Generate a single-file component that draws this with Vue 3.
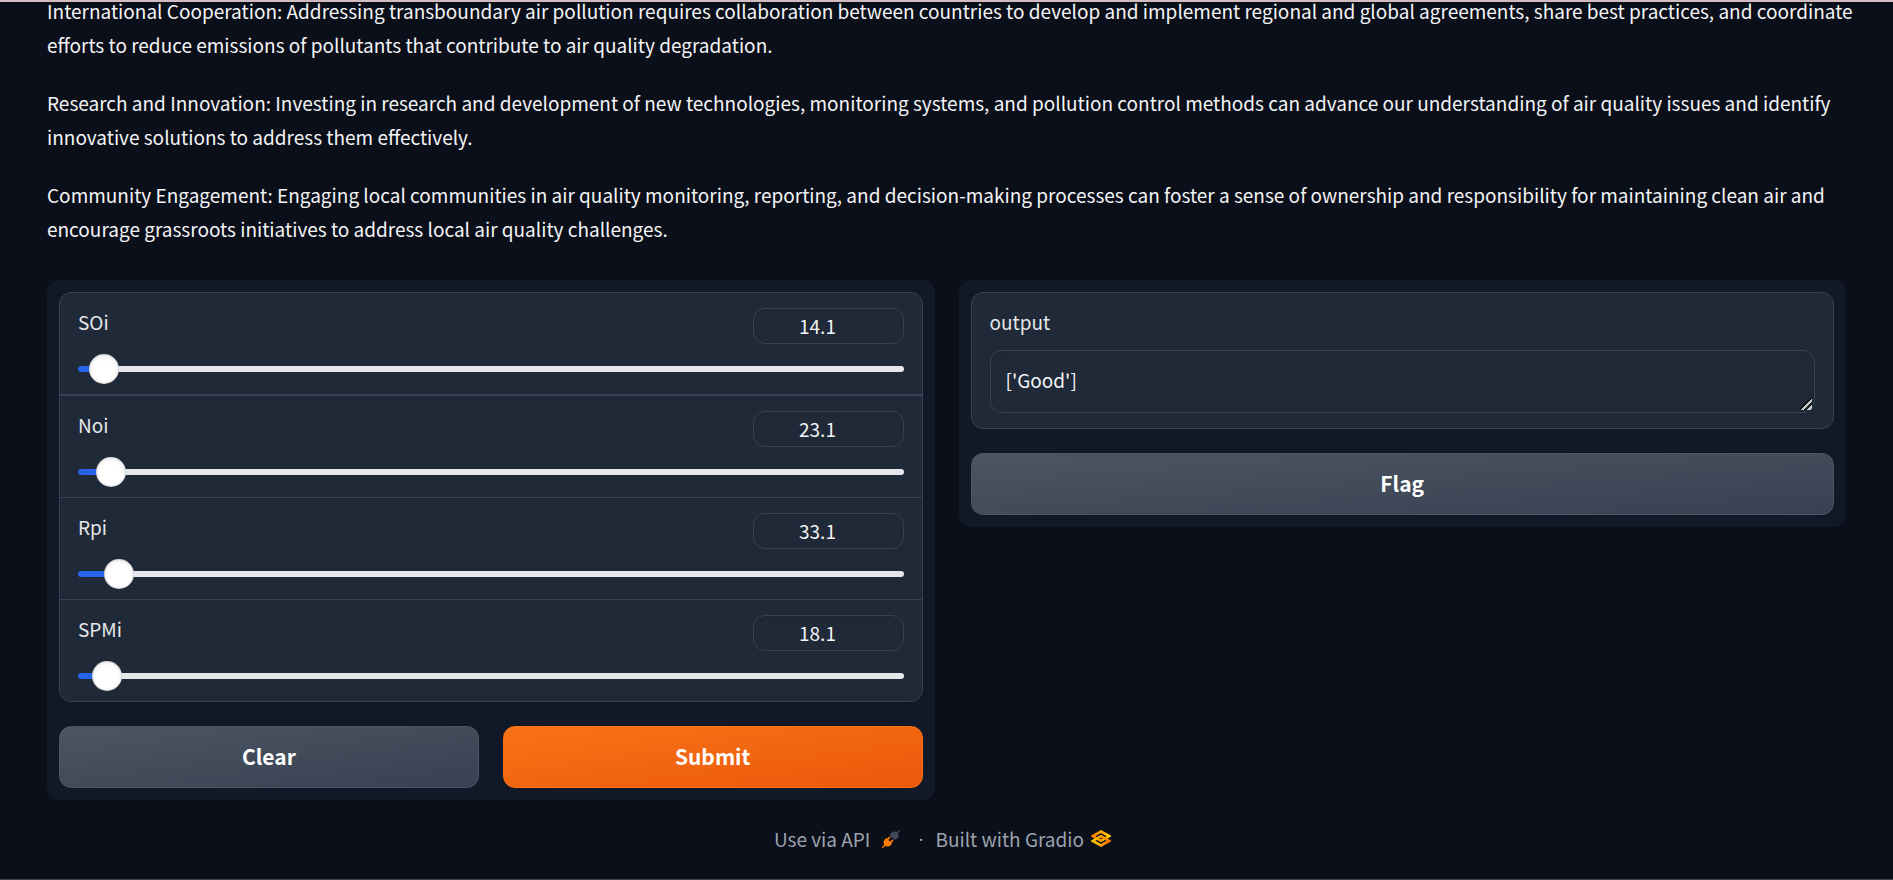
<script setup>
import { reactive, ref } from 'vue'

const paragraphs = [
  'International Cooperation: Addressing transboundary air pollution requires collaboration between countries to develop and implement regional and global agreements, share best practices, and coordinate efforts to reduce emissions of pollutants that contribute to air quality degradation.',
  'Research and Innovation: Investing in research and development of new technologies, monitoring systems, and pollution control methods can advance our understanding of air quality issues and identify innovative solutions to address them effectively.',
  'Community Engagement: Engaging local communities in air quality monitoring, reporting, and decision-making processes can foster a sense of ownership and responsibility for maintaining clean air and encourage grassroots initiatives to address local air quality challenges.',
]

const max = 1000
const sliders = reactive([
  { id: 'soi', label: 'SOi', value: 14.1 },
  { id: 'noi', label: 'Noi', value: 23.1 },
  { id: 'rpi', label: 'Rpi', value: 33.1 },
  { id: 'spmi', label: 'SPMi', value: 18.1 },
])
const output = ref("['Good']")

function clearAll() {
  sliders.forEach((s) => { s.value = 0 })
  output.value = ''
}
</script>

<template>
  <div class="page">
    <main class="content">
      <article class="prose">
        <p v-for="text in paragraphs" :key="text">{{ text }}</p>
      </article>

      <div class="columns">
        <section class="panel">
          <div class="block">
            <div v-for="s in sliders" :key="s.id" class="slider-row">
              <div class="head">
                <label :for="s.id">{{ s.label }}</label>
                <input :id="s.id" v-model.number="s.value" class="number" type="number" min="0" :max="max" step="0.1" />
              </div>
              <input
                v-model.number="s.value"
                class="range"
                type="range"
                min="0"
                :max="max"
                step="0.1"
                :aria-label="s.label"
                :style="{ backgroundSize: (s.value / max) * 100 + 2 + '% 100%' }"
              />
            </div>
          </div>
          <div class="actions">
            <button type="button" class="btn" @click="clearAll">Clear</button>
            <button type="button" class="btn primary">Submit</button>
          </div>
        </section>

        <section class="panel">
          <div class="block output">
            <label for="output">output</label>
            <textarea id="output" v-model="output" rows="1"></textarea>
          </div>
          <div class="actions">
            <button type="button" class="btn">Flag</button>
          </div>
        </section>
      </div>
    </main>

    <footer class="footer">
      <a href="#api">
        Use via API
        <svg class="plug" viewBox="0 0 18 18" aria-hidden="true">
          <path d="M17.3 .8 15 3" stroke="#3f4858" stroke-width="1.4" stroke-linecap="round" />
          <path d="M8.2 4.4C9.8 1.3 13.3 .7 15.4 2.6 17.3 4.7 16.8 8 13.7 9.6L12 9.8 8 6Z" fill="#3f4858" />
          <path d="M.7 17.3 3 15" stroke="#ff7c00" stroke-width="1.4" stroke-linecap="round" />
          <path d="M4.5 8 10 13.6C8.4 16.9 4.8 17.3 2.6 15.4.7 13.2 1.4 9.6 4.5 8Z" fill="#ff7c00" />
          <path d="M5.8 9.2 7.4 7.6M8.8 12.2 10.4 10.6" stroke="#ff7c00" stroke-width="1.9" stroke-linecap="round" />
        </svg>
      </a>
      <span class="dot">·</span>
      <a href="#gradio">
        Built with Gradio
        <svg class="logo" viewBox="0 0 20 17" aria-hidden="true">
          <defs>
            <linearGradient id="logo-top" x1="0" x2="1">
              <stop offset="0" stop-color="#ff7c00" />
              <stop offset="1" stop-color="#ffcf00" />
            </linearGradient>
            <linearGradient id="logo-bottom" x1="0" x2="1">
              <stop offset="0" stop-color="#ffc400" />
              <stop offset="1" stop-color="#ff7c00" />
            </linearGradient>
          </defs>
          <path d="M10 10.8 1.8 6 10 1.5 18.2 6 10 10.8 7.2 9.1" fill="none" stroke="url(#logo-top)" stroke-width="2.6" />
          <path d="M10 6.2 18.2 11 10 15.5 1.8 11 10 6.2 12.8 7.9" fill="none" stroke="url(#logo-bottom)" stroke-width="2.6" />
        </svg>
      </a>
    </footer>
  </div>
</template>

<style>
body {
  margin: 0;
  background: #0b0f19;
}
</style>

<style scoped>
.page {
  box-sizing: border-box;
  min-height: 100vh;
  padding: 0 47px;
  border-top: 2px solid #d2bcc2;
  border-bottom: 1px solid #434449;
  background: #0b0f19;
  color: #f3f4f6;
  color-scheme: dark;
  font-family: "Noto Sans CJK SC", "Noto Sans", sans-serif;
  font-size: 19px;
  line-height: 34px;
}
.content {
  display: flex;
  flex-direction: column;
  gap: 34px;
}
.prose {
  display: flex;
  flex-direction: column;
  gap: 24px;
  margin-top: -8px;
  margin-right: -12px;
}
p {
  margin: 0;
}
.columns {
  display: grid;
  grid-template-columns: 1fr 1fr;
  align-items: start;
  gap: 24px;
}
.panel {
  display: flex;
  flex-direction: column;
  gap: 24px;
  padding: 12px;
  border-radius: 12px;
  background: #111827;
}
.block {
  border: 1px solid #374151;
  border-radius: 12px;
  background: #1f2937;
  overflow: hidden;
}
.slider-row {
  box-sizing: content-box;
  height: 86px;
  padding: 15px 18px 0;
  border-top: 1px solid #374151;
}
.slider-row:first-child {
  border-top: 0;
}
.slider-row:nth-child(2) {
  border-top-width: 2px;
}
.head {
  display: flex;
  justify-content: space-between;
  align-items: flex-start;
}
label {
  color: #e5e7eb;
  line-height: 28px;
}
.number,
textarea {
  box-sizing: border-box;
  margin: 0;
  border: 1px solid #374151;
  border-radius: 12px;
  outline: none;
  background: #1f2937;
  box-shadow: inset 0 2px 5px rgba(0, 0, 0, 0.06);
  color: #f3f4f6;
  font: inherit;
}
.number {
  width: 151px;
  height: 36px;
  padding: 0 14px 2px 8px;
  line-height: 32px;
  text-align: center;
}
.number::-webkit-inner-spin-button {
  opacity: 0;
}
.range {
  display: block;
  appearance: none;
  width: 100%;
  height: 6px;
  margin: 22px 0 0;
  border-radius: 3px;
  outline: none;
  background: #e5e7eb linear-gradient(#2563eb, #2563eb) no-repeat;
  cursor: pointer;
}
.range::-webkit-slider-thumb {
  appearance: none;
  width: 30px;
  height: 30px;
  border: 0;
  border-radius: 50%;
  background: #fff;
  box-shadow: inset 0 0 2px rgba(0, 0, 0, 0.4), inset 0 2px 5px rgba(0, 0, 0, 0.08);
}
.output {
  display: flex;
  flex-direction: column;
  gap: 14px;
  padding: 15px 18px;
}
textarea {
  display: block;
  width: 100%;
  height: 63px;
  padding: 14px 15px;
  line-height: 29px;
  overflow: hidden;
  resize: vertical;
}
textarea::-webkit-resizer {
  background: linear-gradient(
    135deg,
    transparent 42%,
    #0b0b0f 42% 51%,
    #c4c6ca 51% 63%,
    transparent 63% 71%,
    #0b0b0f 71% 79%,
    #c4c6ca 79% 92%,
    transparent 92%
  ) 1px 1px / 12px 12px no-repeat;
}
.actions {
  display: flex;
  gap: 24px;
}
.btn {
  flex: 1;
  height: 62px;
  padding: 0 0 2px;
  border: 1px solid #4b5563;
  border-radius: 12px;
  background: linear-gradient(to bottom right, #4b5563, #374151);
  color: #fff;
  font: bold 21px/30px "Noto Sans CJK SC", "Noto Sans", sans-serif;
  cursor: pointer;
}
.primary {
  border-color: #f97316;
  background: linear-gradient(to bottom right, #f97316, #ea580c);
}
.footer {
  display: flex;
  justify-content: center;
  align-items: center;
  gap: 12px;
  margin-top: 22px;
  color: #9ca3af;
}
a {
  display: flex;
  align-items: center;
  color: inherit;
  text-decoration: none;
}
.dot {
  font-family: "Open Sans", sans-serif;
}
.plug {
  width: 18px;
  height: 18px;
  margin: 0 6px 0 12px;
}
.logo {
  width: 20px;
  height: 17px;
  margin: 0 8px 2px 7px;
}
</style>
